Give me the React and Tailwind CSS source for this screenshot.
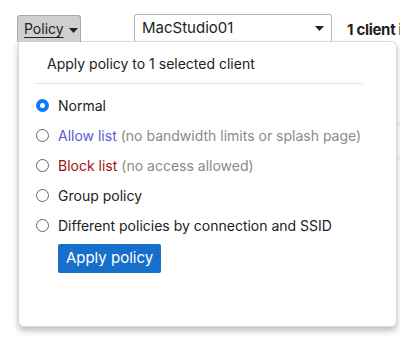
import React, { useState } from "react";

const options = [
  { id: "normal", label: "Normal", color: "text-[#222]" },
  { id: "allow", label: "Allow list", color: "text-[#5b5bd6]", note: "(no bandwidth limits or splash page)" },
  { id: "block", label: "Block list", color: "text-[#a3120f]", note: "(no access allowed)" },
  { id: "group", label: "Group policy", color: "text-[#222]" },
  { id: "diff", label: "Different policies by connection and SSID", color: "text-[#222]" },
];

function Caret({ className }) {
  return (
    <svg width="9" height="5" viewBox="0 0 9 5" className={className}>
      <path d="M0 0h9L4.5 5z" fill="currentColor" />
    </svg>
  );
}

export default function App() {
  const [policy, setPolicy] = useState("normal");

  return (
    <div className="relative w-[400px] h-[337px] bg-white overflow-hidden font-['Inter','Liberation_Sans',sans-serif] text-[#222]">
      {/* table rows peeking out behind the menu */}
      <div className="absolute right-0 top-[124px] w-[4px] border-t border-[#e2e2e2]" />
      <div className="absolute right-0 top-[158px] w-[4px] border-t border-[#e2e2e2]" />

      <div className="flex items-start pt-[14px]">
        <button className="relative z-20 shrink-0 ml-[17px] mt-[1px] w-[64px] h-[27px] pl-[6px] flex items-center gap-[5px] bg-[#cfcfcf] border border-b-0 border-[#a9a9a9] rounded-t-[3px] text-[14px] leading-none">
          <span className="underline underline-offset-[3px]">Policy</span>
          <Caret className="mt-[2px]" />
        </button>

        <div className="shrink-0 ml-[53px] w-[198px] h-[28px] flex items-center justify-between pl-[7px] pr-[6px] border border-[#b5b5b5] rounded-[2px] text-[15px]">
          <span>MacStudio01</span>
          <Caret className="mr-[1px]" />
        </div>

        <div className="shrink-0 ml-[15px] mt-[5px] text-[15px] font-bold tracking-[-0.3px] whitespace-nowrap">1 client in</div>
      </div>

      <div className="absolute z-10 left-[18px] top-[41px] w-[379px] h-[286px] bg-white border border-[#d9d9d9] rounded-b-[6px] rounded-tr-[6px] shadow-[0_4px_6px_rgba(0,0,0,0.25)] px-[17px] pt-[13px]">
        <div className="pl-[11px] text-[14px] leading-[18px] pb-[10px] border-b border-[#e4e4e4] mr-[16px]">
          Apply policy to 1 selected client
        </div>

        <div className="flex flex-col pt-[6px]">
          {options.map((o) => (
            <label key={o.id} className="flex items-center h-[30px] cursor-pointer text-[14px]">
              <span
                className={
                  policy === o.id
                    ? "shrink-0 w-[13px] h-[13px] rounded-full bg-[#0a7aff] flex items-center justify-center"
                    : "shrink-0 w-[13px] h-[13px] rounded-full border-[1.5px] border-[#666]"
                }
              >
                {policy === o.id && <span className="w-[5px] h-[5px] rounded-full bg-white" />}
              </span>
              <input
                type="radio"
                name="policy"
                className="hidden"
                checked={policy === o.id}
                onChange={() => setPolicy(o.id)}
              />
              <span className={`ml-[9px] ${o.color}`}>{o.label}</span>
              {o.note && <span className="ml-[4px] text-[#8a8a8a]">{o.note}</span>}
            </label>
          ))}
        </div>

        <button className="mt-[4px] ml-[22px] w-[103px] h-[29px] bg-[#176fcc] text-white text-[15px] rounded-[2px]">
          Apply policy
        </button>
      </div>
    </div>
  );
}
